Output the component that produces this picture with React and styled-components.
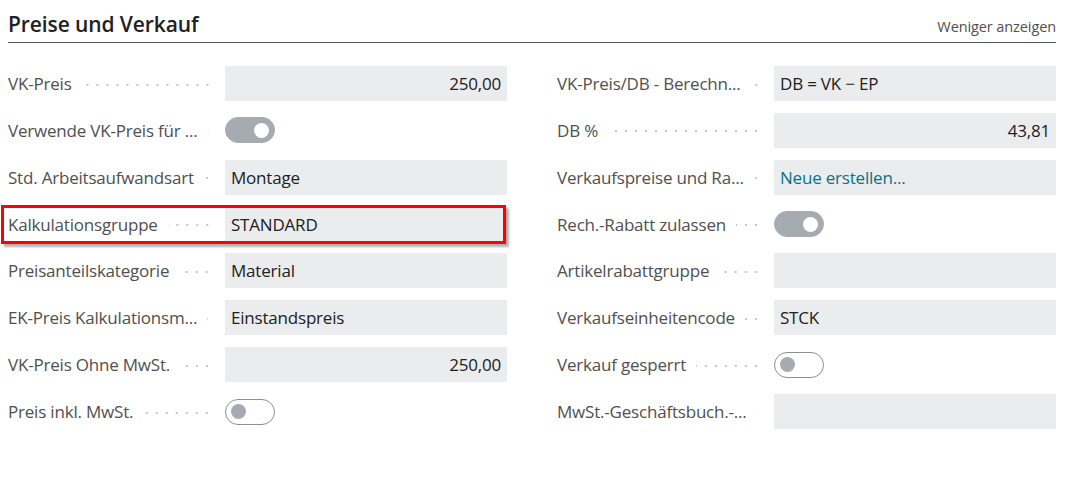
import React from "react";
import styled, { createGlobalStyle } from "styled-components";

const Global = createGlobalStyle`
  html, body { margin: 0; padding: 0; background: #fff; }
  body { font-family: "Open Sans", "Noto Sans", sans-serif; }
`;

const Page = styled.div`
  width: 1071px;
  padding: 0 15px 0 8px;
  box-sizing: border-box;
`;

const Header = styled.div`
  display: flex;
  justify-content: space-between;
  align-items: baseline;
  height: 43px;
  box-sizing: border-box;
  padding-top: 10px;
  border-bottom: 1px solid #4f545b;
`;

const Title = styled.h2`
  margin: 0;
  font-size: 21px;
  line-height: 28px;
  font-weight: 600;
  color: #212121;
  letter-spacing: -0.1px;
`;

const ShowLess = styled.span`
  font-size: 14.5px;
  color: #505050;
  letter-spacing: -0.1px;
`;

const Grid = styled.div`
  display: grid;
  grid-template-columns: 499px 499px;
  column-gap: 50px;
  grid-template-rows: repeat(8, 35px);
  grid-auto-flow: column;
  row-gap: 11.86px;
  margin-top: 23px;
`;

const Row = styled.div`
  position: relative;
  display: grid;
  grid-template-columns: 217px 282px;
  align-items: center;
`;

const LabelCell = styled.div`
  display: flex;
  align-items: center;
  padding-right: 13px;
  min-width: 0;
`;

const Label = styled.span`
  font-size: 17px;
  color: #505050;
  white-space: nowrap;
  letter-spacing: -0.2px;
`;

const Dots = styled.span`
  flex: 1;
  height: 4px;
  margin-left: 10px;
  margin-top: 2px;
  background-image: radial-gradient(circle, #c6c6c6 0.8px, transparent 1.3px);
  background-size: 10px 4px;
  background-position: right center;
  background-repeat: repeat-x;
`;

const Field = styled.div`
  height: 35px;
  background: #ebecee;
  display: flex;
  align-items: center;
  justify-content: ${(p) => (p.$right ? "flex-end" : "flex-start")};
  padding: 0 6px;
  box-sizing: border-box;
  font-size: 17px;
  color: ${(p) => (p.$link ? "#0a7383" : "#212121")};
  letter-spacing: -0.2px;
  white-space: nowrap;
`;

const Toggle = styled.div`
  width: 50px;
  height: 26px;
  border-radius: 13px;
  box-sizing: border-box;
  background: ${(p) => (p.$on ? "#a6aab1" : "#fff")};
  border: 1px solid ${(p) => (p.$on ? "#a6aab1" : "#8d8f93")};
  display: flex;
  align-items: center;
  justify-content: ${(p) => (p.$on ? "flex-end" : "flex-start")};
  padding: 0 5px;
`;

const Knob = styled.span`
  width: 15px;
  height: 15px;
  border-radius: 50%;
  background: ${(p) => (p.$on ? "#fff" : "#a6aab1")};
`;

const Highlight = styled.div`
  position: absolute;
  left: -7px;
  right: 1px;
  top: -2px;
  bottom: -2px;
  border: 3px solid #ff0000;
  box-shadow: 3px 3px 2px rgba(0, 0, 0, 0.3);
  pointer-events: none;
`;

const left = [
  { label: "VK-Preis", value: "250,00", right: true },
  { label: "Verwende VK-Preis für ...", toggle: true, on: true },
  { label: "Std. Arbeitsaufwandsart", value: "Montage" },
  { label: "Kalkulationsgruppe", value: "STANDARD", highlight: true },
  { label: "Preisanteilskategorie", value: "Material" },
  { label: "EK-Preis Kalkulationsm...", value: "Einstandspreis" },
  { label: "VK-Preis Ohne MwSt.", value: "250,00", right: true },
  { label: "Preis inkl. MwSt.", toggle: true, on: false },
];

const right = [
  { label: "VK-Preis/DB - Berechn...", value: "DB = VK − EP" },
  { label: "DB %", value: "43,81", right: true },
  { label: "Verkaufspreise und Ra...", value: "Neue erstellen...", link: true },
  { label: "Rech.-Rabatt zulassen", toggle: true, on: true },
  { label: "Artikelrabattgruppe", value: "" },
  { label: "Verkaufseinheitencode", value: "STCK" },
  { label: "Verkauf gesperrt", toggle: true, on: false },
  { label: "MwSt.-Geschäftsbuch.-...", value: "" },
];

function FieldRow({ item }) {
  return (
    <Row>
      <LabelCell>
        <Label>{item.label}</Label>
        <Dots />
      </LabelCell>
      {item.toggle ? (
        <Toggle $on={item.on}>
          <Knob $on={item.on} />
        </Toggle>
      ) : (
        <Field $right={item.right} $link={item.link}>
          {item.value}
        </Field>
      )}
      {item.highlight && <Highlight />}
    </Row>
  );
}

export default function App() {
  return (
    <Page>
      <Global />
      <Header>
        <Title>Preise und Verkauf</Title>
        <ShowLess>Weniger anzeigen</ShowLess>
      </Header>
      <Grid>
        {left.map((it, i) => (
          <FieldRow key={"l" + i} item={it} />
        ))}
        {right.map((it, i) => (
          <FieldRow key={"r" + i} item={it} />
        ))}
      </Grid>
    </Page>
  );
}
